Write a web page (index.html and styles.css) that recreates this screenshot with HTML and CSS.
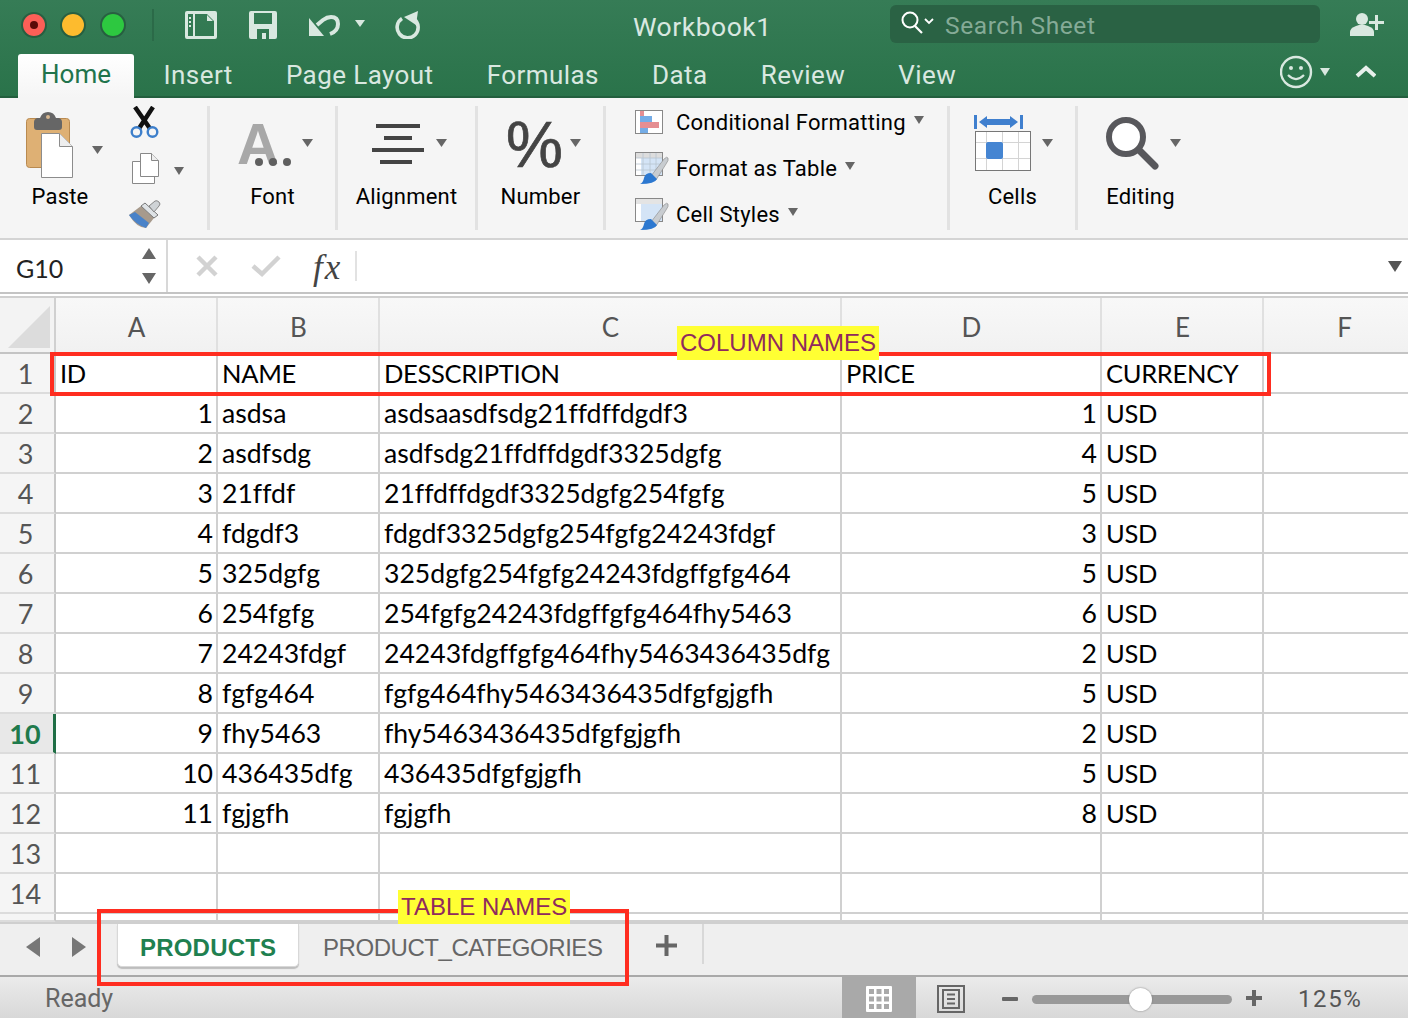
FILE: index.html
```html
<!DOCTYPE html>
<html lang="en">
<head>
<meta charset="utf-8">
<title>Workbook1</title>
<link rel="stylesheet" href="styles.css">
</head>
<body>
<div class="app">
  <header class="titlebar">
    <div class="toprow">
      <div class="lights">
        <span class="light red"><i></i></span>
        <span class="light yellow"></span>
        <span class="light green"></span>
      </div>
      <span class="qsep"></span>
      <svg class="qi-side" width="32" height="28" viewBox="0 0 32 28"><path fill="#d9e8e0" fill-rule="evenodd" d="M2 0h28a2 2 0 0 1 2 2v24a2 2 0 0 1-2 2H2a2 2 0 0 1-2-2V2a2 2 0 0 1 2-2zM3 3v22h5V3zM10 3v22h19V10l-7-7zM22 4v6h6z"/><path fill="#d9e8e0" d="M4 6h2v2H4zM4 10h2v2H4zM4 14h2v2H4z"/></svg>
      <svg class="qi-save" width="28" height="28" viewBox="0 0 28 28"><path fill="#d9e8e0" fill-rule="evenodd" d="M2 0h24a2 2 0 0 1 2 2v24a2 2 0 0 1-2 2H2a2 2 0 0 1-2-2V2a2 2 0 0 1 2-2zM5 2v11h18V2zM8 18v10h12V18zM13 22h4v6h-4z"/></svg>
      <svg class="qi-undo" width="56" height="26" viewBox="0 0 56 26"><path fill="none" stroke="#d9e8e0" stroke-width="4" d="M8 13l6-5q4-3 8-3 7 0 7 7 0 7-8 10"/><path fill="#d9e8e0" d="M0 6l0 18h15z"/><path fill="#d9e8e0" d="M46 8h10l-5 7z"/></svg>
      <svg class="qi-redo" width="26" height="28" viewBox="0 0 26 28"><path fill="none" stroke="#d9e8e0" stroke-width="3.600" d="M7 7.500a10.500 10.500 0 1 0 12 .5"/><path fill="#d9e8e0" d="M9 6L23 0l-2 14z"/></svg>
      <div class="wbtitle">Workbook1</div>
      <div class="search">
        <svg width="36" height="26" viewBox="0 0 36 26"><circle cx="10" cy="10" r="7.500" fill="none" stroke="#fff" stroke-width="2"/><path d="M15 16l7 7" stroke="#fff" stroke-width="2.200"/><path d="M25 9l4 4 4-4" fill="none" stroke="#fff" stroke-width="1.800"/></svg>
        <span>Search Sheet</span>
      </div>
      <svg class="share" width="35" height="24" viewBox="0 0 35 24"><circle cx="12" cy="7" r="6" fill="#d9e8e0"/><path fill="#d9e8e0" d="M0 24v-4q0-4 6-6l3-1h6l3 1q6 2 6 6v4z"/><path fill="#d9e8e0" d="M25 3h3v6h6v3h-6v6h-3v-6h-6V9h6z"/></svg>
    </div>
    <nav class="tabrow">
      <span class="rtab active">Home</span>
      <span class="rtab">Insert</span>
      <span class="rtab">Page Layout</span>
      <span class="rtab">Formulas</span>
      <span class="rtab">Data</span>
      <span class="rtab">Review</span>
      <span class="rtab">View</span>
      <svg class="smile" width="96" height="34" viewBox="0 0 96 34"><circle cx="16" cy="17" r="15" fill="none" stroke="#d9e8e0" stroke-width="2.400"/><circle cx="11" cy="13" r="2" fill="#d9e8e0"/><circle cx="21" cy="13" r="2" fill="#d9e8e0"/><path d="M8 20q8 8 16 0" fill="none" stroke="#d9e8e0" stroke-width="2.200"/><path d="M40 13h10l-5 8z" fill="#d9e8e0"/><path d="M77 21l9-8 9 8" fill="none" stroke="#e8f0ec" stroke-width="4"/></svg>
    </nav>
  </header>

  <section class="ribbon">
    <div class="grp g-paste">
      <div class="big">
        <svg width="120" height="80" viewBox="0 0 120 80"><rect x="26.500" y="12.500" width="43" height="49" rx="3" fill="#deb074" stroke="#b98a50"/><path d="M34 16q0-3 3-4h3q2-6 8-6t8 6h3q3 1 3 4v5q0 3-3 3H37q-3 0-3-3z" fill="#666"/><circle cx="48" cy="11" r="2" fill="#d8b890"/><path d="M41.500 27.500h18l13 13v31h-31z" fill="#fff" stroke="#8c8c8c"/><path d="M59.500 27.500v13h13" fill="#eee" stroke="#8c8c8c"/><path d="M92 40h11l-5.500 8z" fill="#666"/></svg>
        <span class="lbl">Paste</span>
      </div>
      <div class="smalls">
        <svg class="s-cut" width="30" height="34" viewBox="0 0 30 34"><path d="M5 1l16 23M23 1L8 24" stroke="#111" stroke-width="4.500"/><circle cx="6.500" cy="26" r="4.800" fill="#f5f5f5" stroke="#3d7fcb" stroke-width="2.400"/><circle cx="22.500" cy="26" r="4.800" fill="#f5f5f5" stroke="#3d7fcb" stroke-width="2.400"/></svg>
        <svg class="s-copy" width="62" height="31" viewBox="0 0 62 31"><path d="M1.500 8.500h16l6 6v16h-22z" fill="#fff" stroke="#888"/><path d="M9.500.5h11l7 7v16h-18z" fill="#fff" stroke="#888"/><path d="M20.500.5v7h7" fill="#eee" stroke="#888"/><path d="M43 14h10l-5 8z" fill="#666"/></svg>
        <svg class="s-brush" width="33" height="30" viewBox="0 0 33 30"><path d="M1 15l12-9 13 12-8 10q-9 0-17-13z" fill="#a79a8c"/><path d="M1 15q6 9 17 13l3-5-14-11z" fill="#3f7fce" opacity=".9"/><path d="M13 6l4-3 13 12-4 3z" fill="#dfe3e6" stroke="#777"/><path d="M21 6l6-5q2-1 4 1t0 4l-5 6z" fill="#cfd3d6" stroke="#888"/></svg>
      </div>
    </div>
    <div class="grp g-font">
      <svg width="125" height="80" viewBox="0 0 125 80"><text x="27" y="58" class="t-a">A</text><circle cx="49" cy="56" r="4" fill="#5f5f5f"/><circle cx="63" cy="56" r="4" fill="#5f5f5f"/><circle cx="77" cy="56" r="4" fill="#5f5f5f"/><path d="M92 33h11l-5.500 8z" fill="#666"/></svg>
      <span class="lbl">Font</span>
    </div>
    <div class="grp g-align">
      <svg width="137" height="80" viewBox="0 0 137 80"><path d="M38 20h44M46 32h28M34 44h52M42 56h32" stroke="#444" stroke-width="4"/><path d="M98 33h11l-5.500 8z" fill="#666"/></svg>
      <span class="lbl">Alignment</span>
    </div>
    <div class="grp g-num">
      <svg width="125" height="80" viewBox="0 0 125 80"><text x="28" y="61" class="t-p">%</text><path d="M92 33h11l-5.500 8z" fill="#666"/></svg>
      <span class="lbl">Number</span>
    </div>
    <div class="grp g-styles">
      <div class="srow">
        <svg width="28" height="24" viewBox="0 0 28 24"><rect x=".5" y=".5" width="27" height="23" fill="#fff" stroke="#888"/><path d="M5 1h4v5H5z" fill="#e58e92"/><path d="M5 6h12v6H5zM5 18h8v5H5z" fill="#74ace6"/><path d="M5 12h19v6H5z" fill="#e58e92"/></svg>
        <span>Conditional Formatting</span><i class="caret"></i>
      </div>
      <div class="srow">
        <svg class="paint" width="34" height="32" viewBox="0 0 34 32"><rect x=".5" y=".5" width="27" height="23" fill="#fff" stroke="#888"/><path d="M1 1h26v5H1z" fill="#ddd"/><path d="M6 6h21v17H6z" fill="#d4e4f6"/><path d="M8 1v22M15 1v22M21 1v22M1 6h26M1 12h26M1 18h26" stroke="#b8c4d0" stroke-width=".8"/><path d="M16 24L29 7q3-3 4-1t-2 6L21 28z" fill="#c8ccd0" stroke="#888" stroke-width=".6"/><path d="M5 32q3-1 4-6t7-5l6 6q-2 5-17 5z" fill="#2c78d0"/></svg>
        <span>Format as Table</span><i class="caret"></i>
      </div>
      <div class="srow">
        <svg class="paint" width="34" height="32" viewBox="0 0 34 32"><rect x=".5" y=".5" width="27" height="23" fill="#fff" stroke="#888"/><path d="M1 1h26v5H1z" fill="#e4e4e4"/><path d="M6 6h21v17H6z" fill="#d4e4f6"/><path d="M16 24L29 7q3-3 4-1t-2 6L21 28z" fill="#c8ccd0" stroke="#888" stroke-width=".6"/><path d="M5 32q3-1 4-6t7-5l6 6q-2 5-17 5z" fill="#2c78d0"/></svg>
        <span>Cell Styles</span><i class="caret"></i>
      </div>
    </div>
    <div class="grp g-cells">
      <svg width="125" height="80" viewBox="0 0 125 80"><path d="M24 9h3v14h-3zM70 9h3v14h-3z" fill="#3f7fce"/><path d="M29 16l8-6v3h23v-3l8 6-8 6v-3H37v3z" fill="#3f7fce"/><rect x="25.500" y="25.500" width="55" height="39" fill="#fff" stroke="#777"/><path d="M36.500 26v38M52.500 26v38M68.500 26v38M26 36.500h54M26 52.500h54" stroke="#d4d4d4"/><rect x="36" y="36" width="17" height="17" rx="2" fill="#4585d2"/><path d="M92 33h11l-5.500 8z" fill="#666"/></svg>
      <span class="lbl">Cells</span>
    </div>
    <div class="grp g-edit">
      <svg width="125" height="80" viewBox="0 0 125 80"><circle cx="48" cy="31" r="17" fill="#fff" stroke="#58585c" stroke-width="6"/><path d="M62 45l15 15" stroke="#58585c" stroke-width="7" stroke-linecap="round"/><path d="M92 33h11l-5.500 8z" fill="#666"/></svg>
      <span class="lbl">Editing</span>
    </div>
  </section>

  <section class="fbar">
    <div class="namebox">
      <span>G10</span>
      <svg width="16" height="36" viewBox="0 0 16 36"><path d="M1 11L8 0l7 11zM1 25l7 11 7-11z" fill="#666"/></svg>
    </div>
    <div class="fbtns">
      <svg width="24" height="24" viewBox="0 0 24 24"><path d="M3 3l18 18M21 3L3 21" stroke="#d2d2d2" stroke-width="4.500"/></svg>
      <svg width="30" height="24" viewBox="0 0 30 24"><path d="M2 12l9 8L28 3" fill="none" stroke="#d2d2d2" stroke-width="4.500"/></svg>
      <span class="fx">fx</span>
      <i class="fsep"></i>
    </div>
    <svg class="fdrop" width="14" height="11" viewBox="0 0 14 11"><path d="M0 0h14l-7 11z" fill="#555"/></svg>
  </section>

  <section class="sheet">
    <div class="grid">
      <div class="corner"><svg width="42" height="42" viewBox="0 0 42 42"><path d="M42 0v42H0z" fill="#dcdcdc"/></svg></div>
      <div class="ch">A</div><div class="ch">B</div><div class="ch">C</div><div class="ch">D</div><div class="ch">E</div><div class="ch">F</div>

      <div class="rh">1</div><div class="c u">ID</div><div class="c u">NAME</div><div class="c u">DESSCRIPTION</div><div class="c u">PRICE</div><div class="c u">CURRENCY</div><div class="c"></div>
      <div class="rh">2</div><div class="c n">1</div><div class="c">asdsa</div><div class="c">asdsaasdfsdg21ffdffdgdf3</div><div class="c n">1</div><div class="c u">USD</div><div class="c"></div>
      <div class="rh">3</div><div class="c n">2</div><div class="c">asdfsdg</div><div class="c">asdfsdg21ffdffdgdf3325dgfg</div><div class="c n">4</div><div class="c u">USD</div><div class="c"></div>
      <div class="rh">4</div><div class="c n">3</div><div class="c">21ffdf</div><div class="c">21ffdffdgdf3325dgfg254fgfg</div><div class="c n">5</div><div class="c u">USD</div><div class="c"></div>
      <div class="rh">5</div><div class="c n">4</div><div class="c">fdgdf3</div><div class="c">fdgdf3325dgfg254fgfg24243fdgf</div><div class="c n">3</div><div class="c u">USD</div><div class="c"></div>
      <div class="rh">6</div><div class="c n">5</div><div class="c">325dgfg</div><div class="c">325dgfg254fgfg24243fdgffgfg464</div><div class="c n">5</div><div class="c u">USD</div><div class="c"></div>
      <div class="rh">7</div><div class="c n">6</div><div class="c">254fgfg</div><div class="c">254fgfg24243fdgffgfg464fhy5463</div><div class="c n">6</div><div class="c u">USD</div><div class="c"></div>
      <div class="rh">8</div><div class="c n">7</div><div class="c">24243fdgf</div><div class="c">24243fdgffgfg464fhy5463436435dfg</div><div class="c n">2</div><div class="c u">USD</div><div class="c"></div>
      <div class="rh">9</div><div class="c n">8</div><div class="c">fgfg464</div><div class="c">fgfg464fhy5463436435dfgfgjgfh</div><div class="c n">5</div><div class="c u">USD</div><div class="c"></div>
      <div class="rh cur">10</div><div class="c n">9</div><div class="c">fhy5463</div><div class="c">fhy5463436435dfgfgjgfh</div><div class="c n">2</div><div class="c u">USD</div><div class="c"></div>
      <div class="rh">11</div><div class="c n">10</div><div class="c">436435dfg</div><div class="c">436435dfgfgjgfh</div><div class="c n">5</div><div class="c u">USD</div><div class="c"></div>
      <div class="rh">12</div><div class="c n">11</div><div class="c">fgjgfh</div><div class="c">fgjgfh</div><div class="c n">8</div><div class="c u">USD</div><div class="c"></div>
      <div class="rh">13</div><div class="c"></div><div class="c"></div><div class="c"></div><div class="c"></div><div class="c"></div><div class="c"></div>
      <div class="rh">14</div><div class="c"></div><div class="c"></div><div class="c"></div><div class="c"></div><div class="c"></div><div class="c"></div>
      <div class="rh"></div><div class="c"></div><div class="c"></div><div class="c"></div><div class="c"></div><div class="c"></div><div class="c"></div>
    </div>
  </section>

  <section class="tabbar">
    <svg class="navs" width="60" height="20" viewBox="0 0 60 20"><path d="M14 0v20L0 10z" fill="#777"/><path d="M46 0v20l14-10z" fill="#777"/></svg>
    <span class="stab on">PRODUCTS</span>
    <span class="stab off">PRODUCT_CATEGORIES</span>
    <svg class="addsheet" width="21" height="21" viewBox="0 0 21 21"><path d="M8.500 0h4v8.500H21v4h-8.500V21h-4v-8.500H0v-4h8.500z" fill="#666"/></svg>
    <i class="tsep"></i>
  </section>

  <footer class="status">
    <span class="ready">Ready</span>
    <div class="viewbtn">
      <svg width="26" height="26" viewBox="0 0 26 26"><rect width="26" height="26" rx="1" fill="#fff"/><path d="M3 3h5v5H3zM10.500 3h5v5h-5zM18 3h5v5h-5zM3 10.500h5v5H3zM10.500 10.500h5v5h-5zM18 10.500h5v5h-5zM3 18h5v5H3zM10.500 18h5v5h-5zM18 18h5v5h-5z" fill="#a9a9a9"/></svg>
    </div>
    <svg class="pageview" width="28" height="28" viewBox="0 0 28 28"><rect x="1" y="1" width="26" height="26" fill="none" stroke="#666" stroke-width="2"/><rect x="6" y="5" width="16" height="18" fill="none" stroke="#666" stroke-width="2"/><path d="M10 9.500h8M10 14h8M10 18.500h8" stroke="#666" stroke-width="2"/></svg>
    <svg class="zminus" width="16" height="4" viewBox="0 0 16 4"><rect width="16" height="4" rx="1" fill="#666"/></svg>
    <div class="slider"><i class="knob"></i></div>
    <svg class="zplus" width="16" height="16" viewBox="0 0 16 16"><path d="M6 0h4v6h6v4h-6v6H6v-6H0V6h6z" fill="#666"/></svg>
    <span class="zoomval">125%</span>
  </footer>

  <div class="mark mark-cols"></div>
  <span class="tag tag-cols">COLUMN NAMES</span>
  <div class="mark mark-tabs"></div>
  <span class="tag tag-tabs">TABLE NAMES</span>
</div>
</body>
</html>
```
FILE: styles.css
```css
* { box-sizing: border-box; }
html, body { margin: 0; padding: 0; }
body { width: 1408px; height: 1018px; overflow: hidden; background: #fff; font-family: "Roboto", "Liberation Sans", sans-serif; }
.app { position: relative; width: 1408px; height: 1018px; display: flex; flex-direction: column; }

/* title bar */
.titlebar { height: 98px; flex: none; background: linear-gradient(#367c56, #2a734a); border-bottom: 2px solid #235f3e; color: #d9e8e0; }
.toprow { height: 54px; display: flex; align-items: center; position: relative; }
.lights { display: flex; gap: 13px; margin-left: 21px; margin-top: -5px; }
.light { width: 26px; height: 26px; border-radius: 50%; display: flex; align-items: center; justify-content: center; border: 2px solid rgba(0,0,0,.22); background-clip: padding-box; }
.light.red { background-color: #fc5f57; }
.light.red i { width: 8px; height: 8px; border-radius: 50%; background: #5c0a08; }
.light.yellow { background-color: #fdbb2e; }
.light.green { background-color: #2dc840; margin-left: 1px; }
.qsep { width: 2px; height: 32px; background: #2b6a48; margin-left: 26px; margin-top: -5px; }
.qi-side { margin-left: 31px; margin-top: -5px; }
.qi-save { margin-left: 32px; margin-top: -5px; }
.qi-undo { margin-left: 32px; margin-top: -5px; }
.qi-redo { margin-left: 30px; margin-top: -5px; }
.wbtitle { position: absolute; left: 633px; top: 11px; font-size: 26.500px; letter-spacing: .5px; line-height: 32px; }
.search { position: absolute; left: 890px; top: 5px; width: 430px; height: 38px; border-radius: 6px; background: #2a6244; display: flex; align-items: center; padding-left: 10px; color: #85ab97; font-size: 24.500px; letter-spacing: .6px; }
.search svg { margin-right: 9px; margin-top: -2px; }
.search span { position: relative; top: 1px; }
.share { position: absolute; left: 1350px; top: 12px; }
.tabrow { height: 44px; display: flex; align-items: flex-end; padding-left: 18px; position: relative; }
.rtab { height: 42px; padding: 0 26.600px; font-size: 26px; letter-spacing: .42px; line-height: 39px; }
.rtab.active { width: 116px; height: 44px; padding: 0; margin-right: 3px; text-align: center; letter-spacing: 0; line-height: 41px; color: #21744c; background: linear-gradient(#fff, #f5f5f5); border-radius: 3px 3px 0 0; }
.smile { position: absolute; left: 1280px; top: 1px; }

/* ribbon */
.ribbon { height: 142px; flex: none; background: #f5f5f5; border-bottom: 2px solid #d4d4d4; padding: 8px 0; display: flex; color: #000; }
.grp { height: 124px; border-right: 3px solid #e2e2e2; display: flex; flex-direction: column; align-items: center; flex: none; }
.lbl { font-size: 22px; line-height: 22px; letter-spacing: .2px; display: block; text-align: center; }
.g-paste { width: 210px; flex-direction: row; align-items: flex-start; }
.big { width: 120px; display: flex; flex-direction: column; }
.smalls { display: flex; flex-direction: column; align-items: flex-start; padding-left: 8px; }
.s-cut { margin-left: 2px; }
.s-copy { margin-left: 3px; margin-top: 13px; }
.s-brush { margin-top: 16px; }
.g-font { width: 128px; }
.g-align { width: 140px; }
.g-num { width: 128px; }
.g-styles { width: 344px; align-items: flex-start; padding-left: 29px; justify-content: flex-start; }
.g-cells { width: 128px; }
.g-edit { width: 125px; border-right: 0; }
.t-a { font-family: "Liberation Sans", sans-serif; font-weight: 700; font-size: 58px; fill: #a8a8a8; }
.t-p { font-family: "Liberation Sans", sans-serif; font-size: 64px; fill: #444; stroke: #444; stroke-width: .7px; letter-spacing: -2px; }
.srow { height: 46px; display: flex; align-items: center; font-size: 22px; letter-spacing: .25px; flex: none; position: relative; top: -7px; }
.srow svg { margin-right: 13px; flex: none; }
.srow svg.paint { margin-right: 7px; }
.caret { width: 0; height: 0; border-left: 5.500px solid transparent; border-right: 5.500px solid transparent; border-top: 8px solid #666; margin-left: 8px; margin-top: -4px; }

/* formula bar */
.fbar { height: 54px; flex: none; display: flex; align-items: center; border-bottom: 2px solid #c4c4c4; position: relative; }
.namebox { width: 168px; height: 100%; border-right: 2px solid #d8d8d8; display: flex; align-items: center; justify-content: space-between; padding: 0 9px 0 16px; font-family: "Lato", sans-serif; font-size: 25px; color: #222; }
.namebox span { position: relative; top: 2px; }
.fbtns { display: flex; align-items: center; padding-left: 27px; }
.fbtns svg + svg { margin-left: 32px; }
.fx { font-family: "Liberation Serif", serif; font-style: italic; font-size: 35px; letter-spacing: 2px; color: #444; margin-left: 32px; margin-top: 3px; line-height: 40px; }
.fsep { width: 2px; height: 30px; background: #e2e2e2; margin-left: 13px; }
.fdrop { position: absolute; right: 6px; top: 21px; }

/* sheet */
.sheet { height: 626px; flex: none; overflow: hidden; border-top: 2px solid #cfcfcf; margin-top: 2px; }
.grid { display: grid; width: 1426px; grid-template-columns: 56px 162px 162px 462px 260px 162px 162px; grid-template-rows: 56px repeat(14, 40px) 8px; }
.corner { background: #f3f3f3; border-right: 2px solid #d0d0d0; border-bottom: 2px solid #c4c4c4; display: flex; align-items: flex-end; justify-content: flex-end; padding: 0 4px 4px 0; }
.ch { background: linear-gradient(#f8f8f8, #f1f1f1); border-right: 2px solid #e0e0e0; border-bottom: 2px solid #c4c4c4; display: flex; align-items: center; justify-content: center; font-family: "Lato", sans-serif; font-size: 26px; color: #555; padding: 3px 0 0 1px; }
.rh { background: #f5f5f5; border-right: 2px solid #c8c8c8; border-bottom: 2px solid #dcdcdc; display: flex; align-items: center; justify-content: center; font-family: "Lato", sans-serif; font-size: 27px; color: #555; padding-right: 3px; position: relative; }
.rh.cur { color: #1f7a4c; font-weight: 700; background: #e8e8e8; border-right: 3px solid #1f6e45; }
.c { border-right: 2px solid #d0d0d0; border-bottom: 2px solid #d0d0d0; padding: 0 0 0 4px; font-family: "Lato", sans-serif; font-size: 26.600px; font-variant-ligatures: none; line-height: 38px; color: #000; white-space: nowrap; overflow: hidden; }
.c.u { font-size: 25.500px; letter-spacing: -.3px; }
.c.n { text-align: right; padding: 0 3px 0 0; }

/* sheet tabs */
.tabbar { height: 53px; flex: none; background: #efefef; border-top: 2px solid #cfcfcf; display: flex; align-items: flex-start; position: relative; padding-left: 26px; }
.navs { margin-top: 13px; }
.stab { font-family: "Liberation Sans", sans-serif; font-size: 24px; color: #666; height: 43px; line-height: 48px; padding: 0 24px; }
.stab.off { letter-spacing: -.45px; }
.stab.on { margin-left: 31px; background: #fff; color: #1f8050; font-weight: 700; width: 182px; border-radius: 0 0 5px 5px; border: 1px solid #d8d8d8; border-top: 0; box-shadow: 0 2px 1px #bdbdbd; padding: 0 22px; letter-spacing: .2px; }
.addsheet { margin-left: 29px; margin-top: 11px; }
.tsep { width: 2px; height: 40px; background: #d8d8d8; margin-left: 25px; }

/* status bar */
.status { height: 43px; flex: none; background: linear-gradient(#ebebeb, #d8d8d8); border-top: 2px solid #a9a9a9; display: flex; align-items: center; position: relative; }
.ready { font-family: "Roboto", sans-serif; font-size: 25px; color: #666; margin-left: 45px; position: relative; top: 1px; }
.viewbtn { position: absolute; left: 842px; top: 0; width: 74px; height: 41px; background: #a9a9a9; display: flex; align-items: center; justify-content: center; padding-top: 2px; }
.pageview { position: absolute; left: 937px; top: 8px; }
.zminus { position: absolute; left: 1002px; top: 20px; }
.slider { position: absolute; left: 1032px; top: 18px; width: 200px; height: 9px; border-radius: 5px; background: #999; }
.knob { position: absolute; left: 97px; top: -7px; width: 23px; height: 23px; border-radius: 50%; background: #fff; box-shadow: 0 0 2px #777; }
.zplus { position: absolute; left: 1246px; top: 13px; }
.zoomval { position: absolute; left: 1298px; top: 5px; font-size: 24px; letter-spacing: 1.600px; line-height: 34px; color: #555; }

/* annotations */
.mark { position: absolute; border: 4px solid #ff2d20; }
.mark-cols { left: 50px; top: 352px; width: 1221px; height: 44px; }
.mark-tabs { left: 97px; top: 909px; width: 532px; height: 77px; }
.tag { position: absolute; background: #ffff33; color: #8f2a5e; font-family: "Liberation Sans", sans-serif; font-size: 24px; line-height: 34px; height: 34px; padding: 0 3px; white-space: nowrap; }
.tag-cols { left: 677px; top: 326px; }
.tag-tabs { left: 398px; top: 890px; }
```
